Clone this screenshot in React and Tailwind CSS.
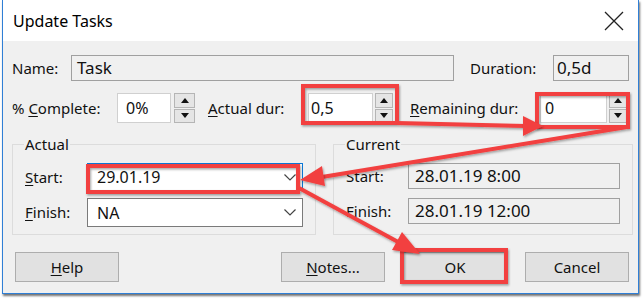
import React from 'react';

const Spinner = ({ className = '' }) => (
  <div className={`flex flex-col gap-[1px] ${className}`}>
    <div className="flex-1 flex items-center justify-center bg-[#e5e5e5] border border-[#b5b5b5]">
      <svg width="8" height="5" viewBox="0 0 8 5"><path d="M0 5 L4 0 L8 5 Z" fill="#111" /></svg>
    </div>
    <div className="flex-1 flex items-center justify-center bg-[#e5e5e5] border border-[#b5b5b5]">
      <svg width="8" height="5" viewBox="0 0 8 5"><path d="M0 0 L4 5 L8 0 Z" fill="#111" /></svg>
    </div>
  </div>
);

const Chevron = () => (
  <svg width="12" height="7" viewBox="0 0 12 7" className="mr-[6px]">
    <path d="M0.5 0.5 L6 6 L11.5 0.5" fill="none" stroke="#444" strokeWidth="1.2" />
  </svg>
);

const U = ({ children }) => <span className="underline underline-offset-[2px]">{children}</span>;

const Button = ({ children, className = '' }) => (
  <div className={`w-[104px] h-[30px] flex items-center justify-center bg-[#e1e1e1] border border-[#adadad] text-[15px] ${className}`}>
    {children}
  </div>
);

const Annotations = () => (
  <svg className="absolute inset-0 pointer-events-none" width="644" height="302" viewBox="0 0 644 302">
    <defs>
      <filter id="sh" x="-10%" y="-10%" width="120%" height="120%">
        <feDropShadow dx="1" dy="1.5" stdDeviation="1.2" floodColor="#000" floodOpacity="0.35" />
      </filter>
    </defs>
    <g filter="url(#sh)" fill="none" stroke="#f2403f" strokeWidth="4">
      <rect x="303" y="86" width="94" height="37" />
      <rect x="537" y="94" width="91" height="33" />
      <rect x="88" y="166" width="210" height="26" />
      <rect x="402" y="250" width="104" height="32" />
      <line x1="397" y1="123" x2="526" y2="126" />
      <line x1="627" y1="127" x2="322" y2="177" />
      <line x1="299" y1="188" x2="400" y2="243" />
    </g>
    <g filter="url(#sh)" fill="#f2403f">
      <polygon points="543,126 523,116 523,136" />
      <polygon points="300,180 325,186 322,166" />
      <polygon points="420,254 392,250 402,232" />
    </g>
  </svg>
);

const App = () => {
  return (
    <div className="relative w-[644px] h-[302px] bg-white overflow-hidden text-[#111] font-['Noto_Sans',_'Open_Sans',_sans-serif]">
      <div className="ml-[2px] w-[637px] border-x border-b border-[#2f7fd6] shadow-[1px_2px_2px_rgba(0,0,0,0.55)]">
        <div className="h-[41px] bg-white flex items-center justify-between pl-[10px] pr-[14px]">
          <span className="text-[16px] text-black">Update Tasks</span>
          <svg width="20" height="20" viewBox="0 0 20 20">
            <path d="M1 1 L19 19 M19 1 L1 19" stroke="#222" strokeWidth="1.3" />
          </svg>
        </div>
        <div className="bg-[#f0f0f0] h-[252px] pl-[9px] pt-[14px] text-[15px]">
          <div className="flex items-center h-[26px]">
            <span className="w-[59px]">Name:</span>
            <div className="w-[383px] h-full border border-[#a0a0a0] bg-[#f0f0f0] flex items-center pl-[5px] text-[17px]">Task</div>
            <span className="ml-[16px] w-[83px]">Duration:</span>
            <div className="w-[76px] h-full border border-[#a0a0a0] bg-[#f0f0f0] flex items-center pl-[3px] text-[17px]">0,5d</div>
          </div>
          <div className="flex items-center h-[30px] mt-[12px]">
            <span className="w-[105px]">% <U>C</U>omplete:</span>
            <div className="w-[54px] h-full border border-[#d0d0d0] bg-white flex items-center pl-[8px] text-[16px]">0%</div>
            <Spinner className="ml-[3px] w-[21px] h-full" />
            <span className="ml-[13px] w-[100px]"><U>A</U>ctual dur:</span>
            <div className="w-[65px] h-full border border-[#d0d0d0] bg-white flex items-center pl-[2px] text-[16px]">0,5</div>
            <Spinner className="ml-[2px] w-[18px] h-full" />
            <span className="ml-[17px] w-[130px]"><U>R</U>emaining dur:</span>
            <div className="w-[67px] h-full border border-[#d0d0d0] bg-white flex items-center pl-[4px] text-[16px]">0</div>
            <Spinner className="ml-[2px] w-[18px] h-full" />
          </div>
          <div className="flex mt-[11px] gap-[17px]">
            <fieldset className="w-[301px] h-[101px] border border-[#dcdcdc] px-[12px]">
              <legend className="ml-[-1px] px-[1px] text-[15px] leading-[21px]">Actual</legend>
              <div className="mt-[8px] flex items-center h-[28px]">
                <span className="w-[62px]"><U>S</U>tart:</span>
                <div className="w-[216px] h-full border border-[#0a78d7] bg-white flex items-center justify-between pl-[9px] text-[16px]">
                  29.01.19
                  <Chevron />
                </div>
              </div>
              <div className="mt-[7px] flex items-center h-[29px]">
                <span className="w-[62px]"><U>F</U>inish:</span>
                <div className="w-[216px] h-full border border-[#7a7a7a] bg-white flex items-center justify-between pl-[9px] text-[16px]">
                  NA
                  <Chevron />
                </div>
              </div>
            </fieldset>
            <fieldset className="w-[299px] h-[101px] border border-[#dcdcdc] px-[12px]">
              <legend className="ml-[-1px] px-[1px] text-[15px] leading-[21px]">Current</legend>
              <div className="mt-[8px] flex items-center h-[26px]">
                <span className="w-[62px]">Start:</span>
                <div className="w-[212px] h-full border border-[#a0a0a0] bg-[#f0f0f0] flex items-center pl-[6px] text-[17px]">28.01.19 8:00</div>
              </div>
              <div className="mt-[9px] flex items-center h-[26px]">
                <span className="w-[62px]">Finish:</span>
                <div className="w-[212px] h-full border border-[#a0a0a0] bg-[#f0f0f0] flex items-center pl-[6px] text-[17px]">28.01.19 12:00</div>
              </div>
            </fieldset>
          </div>
          <div className="flex items-center mt-[17px] pl-[3px]">
            <Button><U>H</U>elp</Button>
            <Button className="ml-auto"><U>N</U>otes...</Button>
            <Button className="ml-[18px]">OK</Button>
            <Button className="ml-[18px] mr-[9px]">Cancel</Button>
          </div>
        </div>
      </div>
      <Annotations />
    </div>
  );
};

export default App;
